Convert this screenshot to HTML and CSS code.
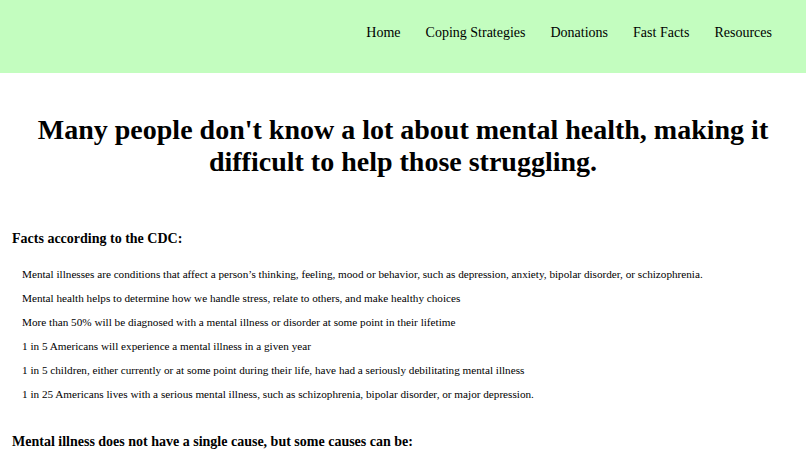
FILE: index.html
```html
<!DOCTYPE html>
<html lang="en">
<head>
<meta charset="utf-8">
<title>Mental Health</title>
<link rel="stylesheet" href="styles.css">
</head>
<body>
<header class="site-header">
  <nav class="nav">
    <a href="#">Home</a>
    <a href="#">Coping Strategies</a>
    <a href="#">Donations</a>
    <a href="#">Fast Facts</a>
    <a href="#">Resources</a>
  </nav>
</header>
<main class="content">
  <h1 class="headline">Many people don't know a lot about mental health, making it difficult to help those struggling.</h1>
  <h2 class="section-title">Facts according to the CDC:</h2>
  <ul class="facts">
    <li>Mental illnesses are conditions that affect a person’s thinking, feeling, mood or behavior, such as depression, anxiety, bipolar disorder, or schizophrenia.</li>
    <li>Mental health helps to determine how we handle stress, relate to others, and make healthy choices</li>
    <li>More than 50% will be diagnosed with a mental illness or disorder at some point in their lifetime</li>
    <li>1 in 5 Americans will experience a mental illness in a given year</li>
    <li>1 in 5 children, either currently or at some point during their life, have had a seriously debilitating mental illness</li>
    <li>1 in 25 Americans lives with a serious mental illness, such as schizophrenia, bipolar disorder, or major depression.</li>
  </ul>
  <h2 class="section-title second">Mental illness does not have a single cause, but some causes can be:</h2>
</main>
</body>
</html>
```
FILE: styles.css
```css
html, body {
  margin: 0;
  padding: 0;
}
body {
  font-family: "Liberation Serif", "Times New Roman", serif;
  color: #000;
  background: #fff;
}
.site-header {
  background: #c3fdbf;
  height: 73px;
  display: flex;
  align-items: center;
  justify-content: flex-end;
  padding-right: 34px;
}
.nav {
  display: flex;
  gap: 25px;
  padding-bottom: 7px;
}
.nav a {
  color: #000;
  text-decoration: none;
  font-size: 14px;
}
.content {
  padding: 0 12px;
}
.headline {
  font-size: 28px;
  font-weight: bold;
  text-align: center;
  line-height: 32px;
  margin: 41px 20px 0;
}
.section-title {
  font-size: 14px;
  font-weight: bold;
  margin: 53px 0 0;
}
.section-title.second {
  margin-top: 33px;
}
.facts {
  list-style: none;
  margin: 21px 0 0;
  padding: 0 0 0 10px;
  font-size: 11.2px;
}
.facts li {
  line-height: 13px;
  margin-bottom: 11px;
}
```
